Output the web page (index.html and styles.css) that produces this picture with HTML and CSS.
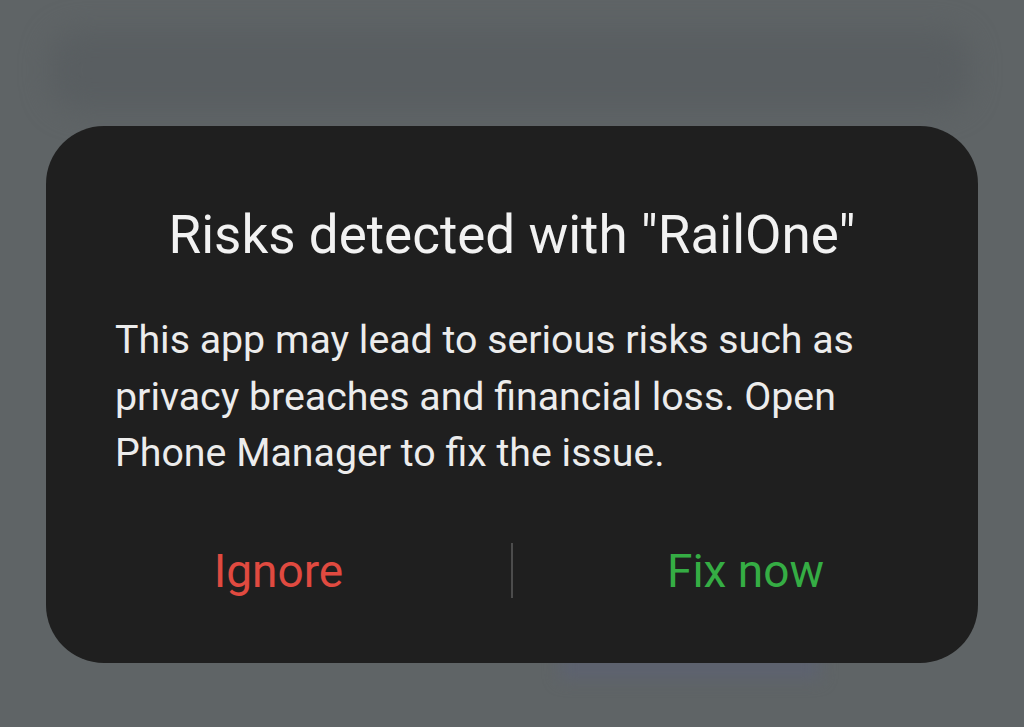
FILE: index.html
```html
<!doctype html>
<html>

<head>
    <title>Risk dialog</title>
    <link rel="stylesheet" href="styles.css">
</head>

<body>
    <div class="backdrop-shape"></div>
    <div class="backdrop-glow"></div>
    <section class="dialog">
        <h1 class="dialog-title">Risks detected with "RailOne"</h1>
        <p class="dialog-text">This app may lead to serious risks such as privacy breaches and financial loss. Open Phone Manager to fix the issue.</p>
        <div class="dialog-actions">
            <a class="action action-ignore">Ignore</a>
            <span class="divider"></span>
            <a class="action action-fix">Fix now</a>
        </div>
    </section>
</body>

</html>
```

FILE: styles.css
```css
body,
html {
    width: 100%;
    height: 100%;
    padding: 0;
    margin: 0;
    overflow: hidden;
}

body {
    background: #5f6466;
    font-family: Roboto, "Noto Sans", sans-serif;
    position: relative;
    display: flex;
    flex-direction: column;
    align-items: flex-start;
}

.backdrop-shape {
    position: absolute;
    left: 50px;
    top: 30px;
    width: 920px;
    height: 80px;
    border-radius: 30px;
    background: #595e61;
    filter: blur(14px);
}

.backdrop-glow {
    position: absolute;
    left: 560px;
    top: 655px;
    width: 260px;
    height: 24px;
    background: #5d6270;
    filter: blur(8px);
}

.dialog {
    position: relative;
    margin: 126px 0 0 46px;
    width: 932px;
    height: 537px;
    box-sizing: border-box;
    background: #1f1f1f;
    border-radius: 58px;
    display: flex;
    flex-direction: column;
}

.dialog-title {
    margin: 79px 0 0;
    font-size: 53px;
    font-weight: 400;
    line-height: 60px;
    color: #f2f2f2;
    text-align: center;
}

.dialog-text {
    margin: 47px 69px 0;
    font-size: 39.3px;
    line-height: 56.5px;
    color: #ececec;
}

.dialog-actions {
    margin-top: 61px;
    display: flex;
    align-items: center;
}

.action {
    flex: 1;
    text-align: center;
    font-size: 46px;
    line-height: 56px;
    cursor: pointer;
}

.action-ignore {
    color: #e04a40;
}

.action-fix {
    color: #35ad44;
}

.divider {
    width: 2px;
    height: 55px;
    background: #4c4c4c;
}
```
